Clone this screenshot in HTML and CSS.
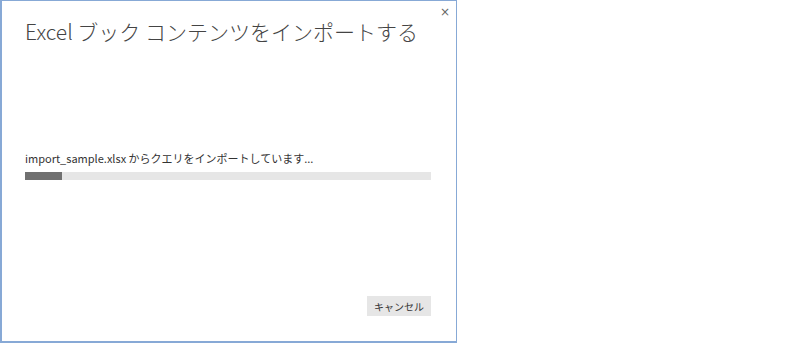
FILE: index.html
```html
<!DOCTYPE html>
<html lang="ja">
<head>
    <meta charset="UTF-8">
    <title>Excel ブック コンテンツをインポートする</title>
    <link rel="stylesheet" href="styles.css">
</head>
<body>
    <div class="dialog">
        <button class="close" type="button">×</button>
        <h1>Excel ブック コンテンツをインポートする</h1>
        <div class="progress">
            <p>import_sample.xlsx からクエリをインポートしています...</p>
            <div class="bar"><div class="fill" style="width: 9%;"></div></div>
        </div>
        <div class="actions">
            <button class="cancel" type="button">キャンセル</button>
        </div>
    </div>
</body>
</html>
```

FILE: styles.css
```css
body {
    margin: 0;
    background-color: #ffffff;
    font-family: "Noto Sans CJK JP", "Noto Sans", sans-serif;
}
.dialog {
    position: relative;
    box-sizing: border-box;
    width: 457px;
    height: 343px;
    border: 1px solid #87a9d6;
    border-left-width: 2px;
    border-bottom-width: 2px;
    background-color: white;
    padding: 0 25px 0 23px;
    display: flex;
    flex-direction: column;
}
.close {
    position: absolute;
    top: 4px;
    right: 6px;
    border: none;
    background: none;
    padding: 0;
    font-size: 12px;
    color: #666;
    font-family: "DejaVu Sans", sans-serif;
}
h1 {
    margin: 14px 0 0;
    font-size: 21px;
    font-weight: 300;
    color: #444;
    line-height: 32px;
    white-space: nowrap;
}
.progress {
    margin-top: 103px;
}
.progress p {
    margin: 0;
    font-size: 11px;
    color: #333;
    line-height: 16px;
}
.bar {
    margin-top: 6px;
    height: 8px;
    background-color: #e6e6e6;
}
.fill {
    height: 100%;
    background-color: #707070;
}
.actions {
    margin-top: auto;
    margin-bottom: 25px;
    display: flex;
    justify-content: flex-end;
}
.cancel {
    border: none;
    background-color: #e6e6e6;
    font-family: inherit;
    font-size: 10px;
    color: #333;
    width: 64px;
    height: 20px;
    padding: 0;
}
```
